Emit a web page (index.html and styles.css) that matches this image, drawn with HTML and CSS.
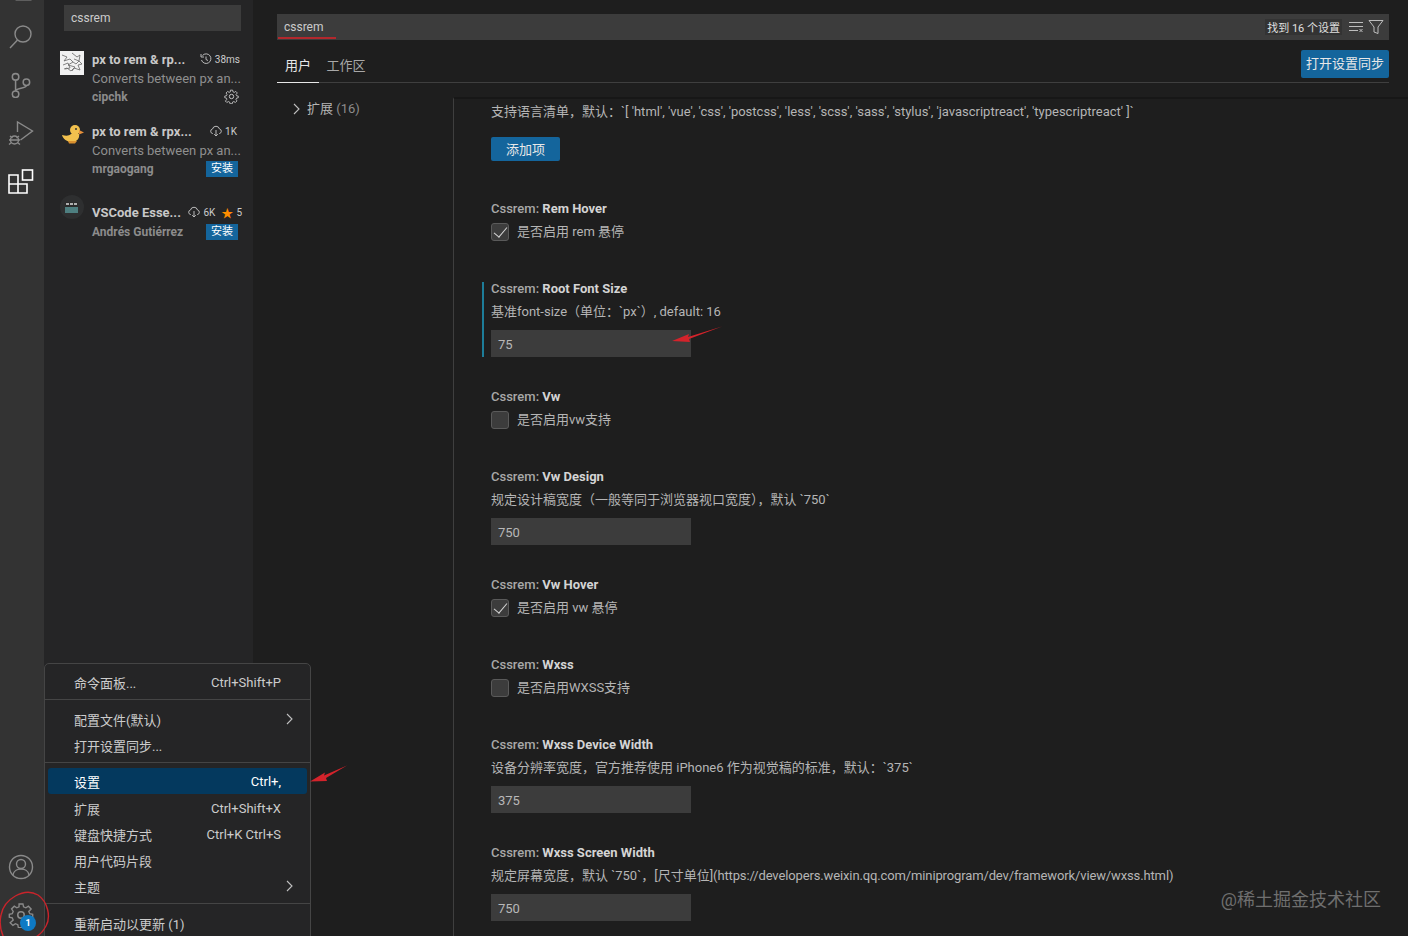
FILE: index.html
```html
<!DOCTYPE html>
<html lang="zh-CN">
<head>
    <meta charset="UTF-8">
    <title>设置 - cssrem</title>
    <link rel="stylesheet" href="styles.css">
</head>
<body>
    <div class="workbench">
        <nav class="activity-bar">
            <div class="activity-group top">
                <div class="activity-item">
                    <svg viewBox="0 0 24 24" class="icon"><path d="M3 2h12l6 6v14H7"/></svg>
                </div>
                <div class="activity-item">
                    <svg viewBox="0 0 26 26" class="icon"><circle cx="15" cy="10" r="8"/><path d="M9.500 16L2 24"/></svg>
                </div>
                <div class="activity-item">
                    <svg viewBox="0 0 24 24" class="icon"><circle cx="7" cy="4.500" r="3"/><circle cx="7" cy="20.500" r="3"/><circle cx="17" cy="9.500" r="3"/><path d="M7 7.500v10M17 12.500c0 3-10 2-10 5"/></svg>
                </div>
                <div class="activity-item">
                    <svg viewBox="0 0 26 26" class="icon"><path d="M9.500 12V2l15 9-12 9"/><path d="M1 20h11M2 16l2.500 2M11 16l-2.500 2M1 24.500l2.500-2M12 24.500l-2.500-2"/><circle cx="6.500" cy="20" r="4"/></svg>
                </div>
                <div class="activity-item">
                    <svg viewBox="0 0 26 26" class="icon active"><path d="M1 7h9v9h9v9H1zM1 16h9v9"/><rect x="14.500" y="2" width="10" height="10"/></svg>
                </div>
            </div>
            <div class="activity-group">
                <div class="activity-item">
                    <svg viewBox="0 0 26 26" class="icon"><circle cx="13" cy="13" r="11.500"/><circle cx="13" cy="10" r="4.500"/><path d="M5 21c1-8 15-8 16 0"/></svg>
                </div>
                <div class="activity-item gear">
                    <svg viewBox="0 0 24 24" class="icon"><circle cx="12" cy="12" r="3"/><path d="M10 2h4l.6 3 2.400 1 2.600-1.700 2.800 2.800L20 9.700l1 2.300 3 .6v3l-3 .6-1 2.400 1.700 2.600-2.800 2.800-2.600-1.700-2.400 1-.6 3h-4l-.6-3-2.400-1-2.600 1.700-2.800-2.800L4 18.600 3 16.200 0 15.600v-3l3-.6 1-2.300-1.700-2.600 2.800-2.800L7.700 6l2.300-1z" transform="translate(1.200 0) scale(.9)"/></svg>
                    <span class="badge">1</span>
                </div>
            </div>
        </nav>

        <aside class="sidebar">
            <div class="ext-search">cssrem</div>
            <div class="ext-list">
                <div class="ext-item">
                    <svg viewBox="0 0 24 24" class="ext-icon"><rect width="24" height="24" fill="#f1f1f1"/><path d="M2 4l5 2-3 4 6-2 3 3-5 3 7 2-3 4M12 2l5 4 3-2-1 6 3 3-4 1 2 5-6-2-3 3-4-3-3 1M3 14l5-2 2 5-5 1M14 8l5 2-3 3-3-2" fill="none" stroke="#666" stroke-width=".8"/></svg>
                    <div class="ext-body">
                        <div class="ext-head">
                            <span class="ext-name">px to rem &amp; rp...</span>
                            <span class="ext-stat">
                                <svg viewBox="0 0 12 12" class="mini"><path d="M2.500 2.500A4.800 4.800 0 1 1 1.500 7M1 1v3h3M6 3.500V6.500l2 1"/></svg>
                                38ms
                            </span>
                        </div>
                        <div class="ext-desc">Converts between px an...</div>
                        <div class="ext-foot">
                            <span class="ext-author">cipchk</span>
                            <svg viewBox="0 0 24 24" class="ext-gear"><circle cx="12" cy="12" r="3.500"/><path d="M10 2h4l.6 3 2.400 1 2.600-1.700 2.800 2.800L20 9.700l1 2.300 3 .6v3l-3 .6-1 2.400 1.700 2.600-2.800 2.800-2.600-1.700-2.400 1-.6 3h-4l-.6-3-2.400-1-2.600 1.700-2.800-2.800L4 18.600 3 16.200 0 15.600v-3l3-.6 1-2.300-1.700-2.600 2.800-2.800L7.700 6l2.300-1z" transform="translate(1.200 0) scale(.9)"/></svg>
                        </div>
                    </div>
                </div>
                <div class="ext-item">
                    <svg viewBox="0 0 24 24" class="ext-icon"><circle cx="15" cy="7" r="5" fill="#f2c14e"/><path d="M2 12c4 1 7 1 9-1h8c1 4-2 8-7 8-5 0-9-3-10-7z" fill="#f2c14e"/><path d="M19 7l5 2.500-5 2z" fill="#e8913a"/><circle cx="16" cy="6" r="1" fill="#333"/><path d="M8 18h9l-2 2.500H9z" fill="#d9902f"/></svg>
                    <div class="ext-body">
                        <div class="ext-head">
                            <span class="ext-name">px to rem &amp; rpx...</span>
                            <span class="ext-stat inset">
                                <svg viewBox="0 0 12 12" class="mini"><path d="M3 8.500H2.500a2.300 2.300 0 0 1 0-4.500 3.600 3.600 0 0 1 7 0 2.300 2.300 0 0 1 0 4.500H9M6 5v6M4.200 9.200L6 11l1.800-1.800"/></svg>
                                1K
                            </span>
                        </div>
                        <div class="ext-desc">Converts between px an...</div>
                        <div class="ext-foot">
                            <span class="ext-author">mrgaogang</span>
                            <span class="install">安装</span>
                        </div>
                    </div>
                </div>
                <div class="ext-item short">
                    <svg viewBox="0 0 24 24" class="ext-icon"><circle cx="12" cy="12" r="12" fill="#2e2f30"/><rect x="5" y="7" width="13" height="11" fill="#4e7f80"/><rect x="5" y="7" width="13" height="5" fill="#2b2b2b"/><path d="M6 9h3M10 9h3M14 9h3" stroke="#ddd" stroke-width="1.500"/></svg>
                    <div class="ext-body">
                        <div class="ext-head">
                            <span class="ext-name">VSCode Esse...</span>
                            <span class="ext-stat outset">
                                <svg viewBox="0 0 12 12" class="mini"><path d="M3 8.500H2.500a2.300 2.300 0 0 1 0-4.500 3.600 3.600 0 0 1 7 0 2.300 2.300 0 0 1 0 4.500H9M6 5v6M4.200 9.200L6 11l1.800-1.800"/></svg>
                                6K
                                <span class="star">★</span>
                                5
                            </span>
                        </div>
                        <div class="ext-foot tight">
                            <span class="ext-author">Andrés Gutiérrez</span>
                            <span class="install">安装</span>
                        </div>
                    </div>
                </div>
            </div>
        </aside>

        <main class="editor">
            <header class="settings-header">
                <div class="settings-search">
                    <span class="search-text">cssrem</span>
                    <span class="search-count">找到 16 个设置</span>
                    <svg viewBox="0 0 16 16" class="tool"><path d="M1 3.500h14M1 7.500h14M1 11.500h9"/><path d="M11.500 10l3 3M14.500 10l-3 3"/></svg>
                    <svg viewBox="0 0 16 16" class="tool"><path d="M1 1.500h14L10 8v6.500l-4-1.500V8z"/></svg>
                </div>
                <div class="tabs-row">
                    <span class="tab active">用户</span>
                    <span class="tab">工作区</span>
                    <button class="sync-btn">打开设置同步</button>
                </div>
            </header>

            <div class="settings-body">
                <div class="toc">
                    <svg viewBox="0 0 10 12" class="chev"><path d="M2 1l5 5-5 5"/></svg>
                    <span>扩展 <em>(16)</em></span>
                </div>
                <div class="settings-list">
                    <section class="setting first">
                        <p class="desc">支持语言清单，默认：`[ 'html', 'vue', 'css', 'postcss', 'less', 'scss', 'sass', 'stylus', 'javascriptreact', 'typescriptreact' ]`</p>
                        <button class="add-btn">添加项</button>
                    </section>
                    <section class="setting bool">
                        <h3>Cssrem: <b>Rem Hover</b></h3>
                        <label class="check-row"><span class="check on"></span>是否启用 rem 悬停</label>
                    </section>
                    <section class="setting focused">
                        <h3>Cssrem: <b>Root Font Size</b></h3>
                        <p class="desc">基准font-size（单位：`px`）, default: 16</p>
                        <div class="num-input">75</div>
                    </section>
                    <section class="setting bool">
                        <h3>Cssrem: <b>Vw</b></h3>
                        <label class="check-row"><span class="check"></span>是否启用vw支持</label>
                    </section>
                    <section class="setting">
                        <h3>Cssrem: <b>Vw Design</b></h3>
                        <p class="desc">规定设计稿宽度（一般等同于浏览器视口宽度），默认 `750`</p>
                        <div class="num-input">750</div>
                    </section>
                    <section class="setting bool">
                        <h3>Cssrem: <b>Vw Hover</b></h3>
                        <label class="check-row"><span class="check on"></span>是否启用 vw 悬停</label>
                    </section>
                    <section class="setting bool">
                        <h3>Cssrem: <b>Wxss</b></h3>
                        <label class="check-row"><span class="check"></span>是否启用WXSS支持</label>
                    </section>
                    <section class="setting">
                        <h3>Cssrem: <b>Wxss Device Width</b></h3>
                        <p class="desc">设备分辨率宽度，官方推荐使用 iPhone6 作为视觉稿的标准，默认：`375`</p>
                        <div class="num-input">375</div>
                    </section>
                    <section class="setting">
                        <h3>Cssrem: <b>Wxss Screen Width</b></h3>
                        <p class="desc">规定屏幕宽度，默认 `750`，[尺寸单位]<span class="url">(https://developers.weixin.qq.com/miniprogram/dev/framework/view/wxss.html)</span></p>
                        <div class="num-input">750</div>
                    </section>
                </div>
            </div>
        </main>
    </div>

    <div class="menu">
        <div class="menu-item">命令面板...<span class="key">Ctrl+Shift+P</span></div>
        <div class="menu-sep"></div>
        <div class="menu-item">配置文件(默认)<svg viewBox="0 0 10 12" class="chev menu-chev"><path d="M2 1l5 5-5 5"/></svg></div>
        <div class="menu-item">打开设置同步...</div>
        <div class="menu-sep"></div>
        <div class="menu-item selected">设置<span class="key">Ctrl+,</span></div>
        <div class="menu-item">扩展<span class="key">Ctrl+Shift+X</span></div>
        <div class="menu-item">键盘快捷方式<span class="key">Ctrl+K Ctrl+S</span></div>
        <div class="menu-item">用户代码片段</div>
        <div class="menu-item">主题<svg viewBox="0 0 10 12" class="chev menu-chev"><path d="M2 1l5 5-5 5"/></svg></div>
        <div class="menu-sep"></div>
        <div class="menu-item">重新启动以更新 (1)</div>
    </div>

    <!-- annotations drawn on the screenshot -->
    <svg class="marks" viewBox="0 0 1408 936">
        <rect x="278" y="37" width="58" height="2" fill="#b2282d"/>
        <path d="M722 326.500L688 337L689 334L672 341L690 342L689 339Z" fill="#d4232b"/>
        <path d="M347 765.500L324 775.500L325 772.500L310 781.500L327 781L326 778Z" fill="#d4232b"/>
        <path d="M1 915C4 899 24 887 38 895C48 902 51 917 46 926C43 932 38 936 34 938M1 915C-1 924 1 932 4 938" fill="none" stroke="#c9242b" stroke-width="1.400"/>
    </svg>

    <div class="watermark">@稀土掘金技术社区</div>
</body>
</html>
```

FILE: styles.css
```css
* {
    box-sizing: border-box;
}
html, body {
    margin: 0;
    height: 936px;
    overflow: hidden;
}
body {
    position: relative;
    background: #1e1e1e;
    color: #ccc;
    font-family: Roboto, "Noto Sans CJK SC", sans-serif;
    font-size: 13px;
}
.workbench {
    display: flex;
    height: 936px;
}

/* activity bar */
.activity-bar {
    width: 44px;
    flex: none;
    background: #333;
    display: flex;
    flex-direction: column;
    justify-content: space-between;
    margin-bottom: -3px;
}
.activity-group.top {
    margin-top: -35px;
}
.activity-item {
    height: 48px;
    position: relative;
    display: flex;
    align-items: center;
    justify-content: center;
    padding-right: 3px;
}
.icon {
    width: 26px;
    height: 26px;
    fill: none;
    stroke: #8a8a8a;
    stroke-width: 1.400;
}
.icon.active {
    stroke: #fff;
    stroke-width: 1.600;
}
.badge {
    position: absolute;
    left: 20px;
    top: 24px;
    width: 16px;
    height: 16px;
    border-radius: 50%;
    background: #0e7ac4;
    color: #fff;
    font-size: 9px;
    font-weight: 700;
    line-height: 16px;
    text-align: center;
}

/* sidebar */
.sidebar {
    width: 209px;
    flex: none;
    background: #252526;
    padding-top: 5px;
}
.ext-search {
    margin-left: 20px;
    width: 177px;
    height: 26px;
    background: #3c3c3c;
    padding-left: 7px;
    line-height: 27px;
    font-size: 12px;
}
.ext-list {
    margin-top: 17px;
}
.ext-item {
    display: flex;
    height: 72px;
    padding-left: 16px;
    padding-top: 3px;
}
.ext-icon {
    width: 24px;
    height: 24px;
    flex: none;
}
.ext-body {
    width: 148px;
    margin-left: 8px;
}
.ext-head {
    display: flex;
    justify-content: space-between;
    align-items: center;
    height: 16px;
    white-space: nowrap;
}
.short .ext-head {
    margin-top: 9px;
}
.ext-name {
    font-weight: 700;
    color: #c8c8c8;
}
.ext-stat {
    display: flex;
    align-items: center;
    gap: 3px;
    font-size: 10px;
    color: #ccc;
}
.ext-stat.inset {
    margin-right: 3px;
}
.ext-stat.outset {
    margin-right: -2px;
}
.mini {
    width: 12px;
    height: 12px;
    fill: none;
    stroke: #bbb;
    stroke-width: 1;
}
.star {
    color: #ff8e00;
    font-size: 12px;
    margin-left: 3px;
}
.ext-desc {
    margin-top: 3px;
    height: 18px;
    line-height: 18px;
    color: #8f8f8f;
    white-space: nowrap;
}
.ext-foot {
    display: flex;
    justify-content: space-between;
    align-items: center;
    height: 18px;
}
.ext-foot.tight {
    margin-top: 3px;
}
.ext-author {
    font-size: 12px;
    font-weight: 700;
    color: #8c8c8c;
}
.ext-gear {
    width: 15px;
    height: 15px;
    fill: none;
    stroke: #ccc;
    stroke-width: 1.500;
    margin: -2px 1px 0 0;
}
.install {
    width: 32px;
    height: 16px;
    margin-right: 2px;
    background: #14659c;
    color: #fff;
    font-size: 11px;
    line-height: 16px;
    text-align: center;
}

/* settings editor */
.editor {
    flex: 1;
    min-width: 0;
    display: flex;
    flex-direction: column;
}
.settings-header {
    height: 97px;
    padding: 14px 19px 0 24px;
    flex: none;
}
.settings-search {
    height: 26px;
    background: #3c3c3c;
    display: flex;
    align-items: center;
    padding: 0 5px 0 7px;
}
.search-text {
    flex: 1;
    font-size: 12px;
}
.search-count {
    background: #333;
    color: #e0e0e0;
    font-size: 11px;
    padding: 0 2px;
    margin-right: 2px;
}
.tool {
    width: 16px;
    height: 16px;
    margin-left: 4px;
    fill: none;
    stroke: #bdbdbd;
    stroke-width: 1;
}
.tabs-row {
    display: flex;
    align-items: flex-start;
    height: 33px;
    margin-top: 10px;
    border-bottom: 1px solid #3f3f3f;
}
.tab {
    height: 33px;
    line-height: 32px;
    width: 42px;
    text-align: center;
    color: #a8a8a8;
    margin-right: 6px;
    white-space: nowrap;
}
.tab.active {
    color: #e7e7e7;
    border-bottom: 1px solid #e7e7e7;
}
.sync-btn {
    margin-left: auto;
    width: 88px;
    height: 28px;
    background: #14659c;
    color: #e8e8e8;
    border: none;
    border-radius: 2px;
    font: inherit;
    padding: 0 0 3px;
}
.settings-body {
    flex: 1;
    display: flex;
    min-height: 0;
}
.toc {
    width: 200px;
    flex: none;
    padding: 3px 0 0 39px;
    display: flex;
    align-items: flex-start;
    gap: 5px;
    line-height: 18px;
    color: #b5b5b5;
}
.toc em {
    font-style: normal;
    color: #8c8c8c;
}
.chev {
    width: 10px;
    height: 12px;
    margin-top: 3px;
    fill: none;
    stroke: #c0c0c0;
    stroke-width: 1.100;
}
.settings-list {
    flex: 1;
    border-left: 1px solid #3f3f3f;
    border-top: 2px solid #171717;
    padding-left: 37px;
}
.setting {
    height: 108px;
    position: relative;
}
.setting.bool {
    height: 80px;
}
.setting.first {
    height: 103px;
    padding-top: 3px;
}
.setting.first .desc {
    margin-top: 0;
}
.setting.focused::before {
    content: "";
    position: absolute;
    left: -9px;
    top: 0;
    width: 2px;
    height: 75px;
    background: #1d7d99;
}
.setting h3 {
    margin: 0;
    font-size: 13px;
    font-weight: 500;
    line-height: 14px;
    color: #a8a8a8;
    white-space: nowrap;
}
.setting h3 b {
    font-weight: 700;
    color: #d4d4d4;
}
.desc {
    margin: 6px 0 0;
    line-height: 20px;
    color: #b5b5b5;
    white-space: nowrap;
}
.url {
    letter-spacing: -0.13px;
}
.add-btn {
    display: block;
    margin-top: 15px;
    width: 69px;
    height: 24px;
    background: #14659c;
    color: #e8e8e8;
    border: none;
    border-radius: 2px;
    font: inherit;
    padding: 0 0 2px;
}
.num-input {
    margin-top: 8px;
    width: 200px;
    height: 27px;
    background: #3c3c3c;
    padding-left: 7px;
    line-height: 29px;
    color: #b8b8b8;
}
.check-row {
    display: flex;
    align-items: center;
    gap: 8px;
    margin-top: 7px;
    height: 18px;
    line-height: 16px;
    color: #b5b5b5;
}
.check {
    width: 18px;
    height: 18px;
    background: #3c3c3c;
    border: 1px solid #5a5a5a;
    border-radius: 3px;
    position: relative;
}
.check.on::after {
    content: "";
    position: absolute;
    left: 5px;
    top: 0;
    width: 6px;
    height: 12px;
    border: solid #d8d8d8;
    border-width: 0 1.500px 1.500px 0;
    transform: rotate(40deg);
}

/* gear menu */
.menu {
    position: absolute;
    left: 44px;
    top: 663px;
    width: 267px;
    height: 280px;
    background: #252526;
    border: 1px solid #454545;
    border-radius: 5px;
    padding: 5px 3px;
}
.menu-item {
    position: relative;
    display: flex;
    justify-content: space-between;
    align-items: center;
    height: 26px;
    padding: 0 26px;
    color: #ccc;
    border-radius: 3px;
}
.menu-item.selected {
    margin: -1px 0 1px;
    padding-top: 1px;
    background: #04395e;
    color: #fff;
}
.menu-sep {
    height: 1px;
    background: #454545;
    margin: 4px -3px 6px;
}
.menu-chev {
    position: absolute;
    right: 12px;
    top: 4px;
}

/* overlays */
.marks {
    position: absolute;
    left: 0;
    top: 0;
    width: 1408px;
    height: 936px;
    pointer-events: none;
}
.watermark {
    position: absolute;
    right: 27px;
    top: 885px;
    font-size: 18px;
    color: #6f6f6f;
    white-space: nowrap;
}
```
